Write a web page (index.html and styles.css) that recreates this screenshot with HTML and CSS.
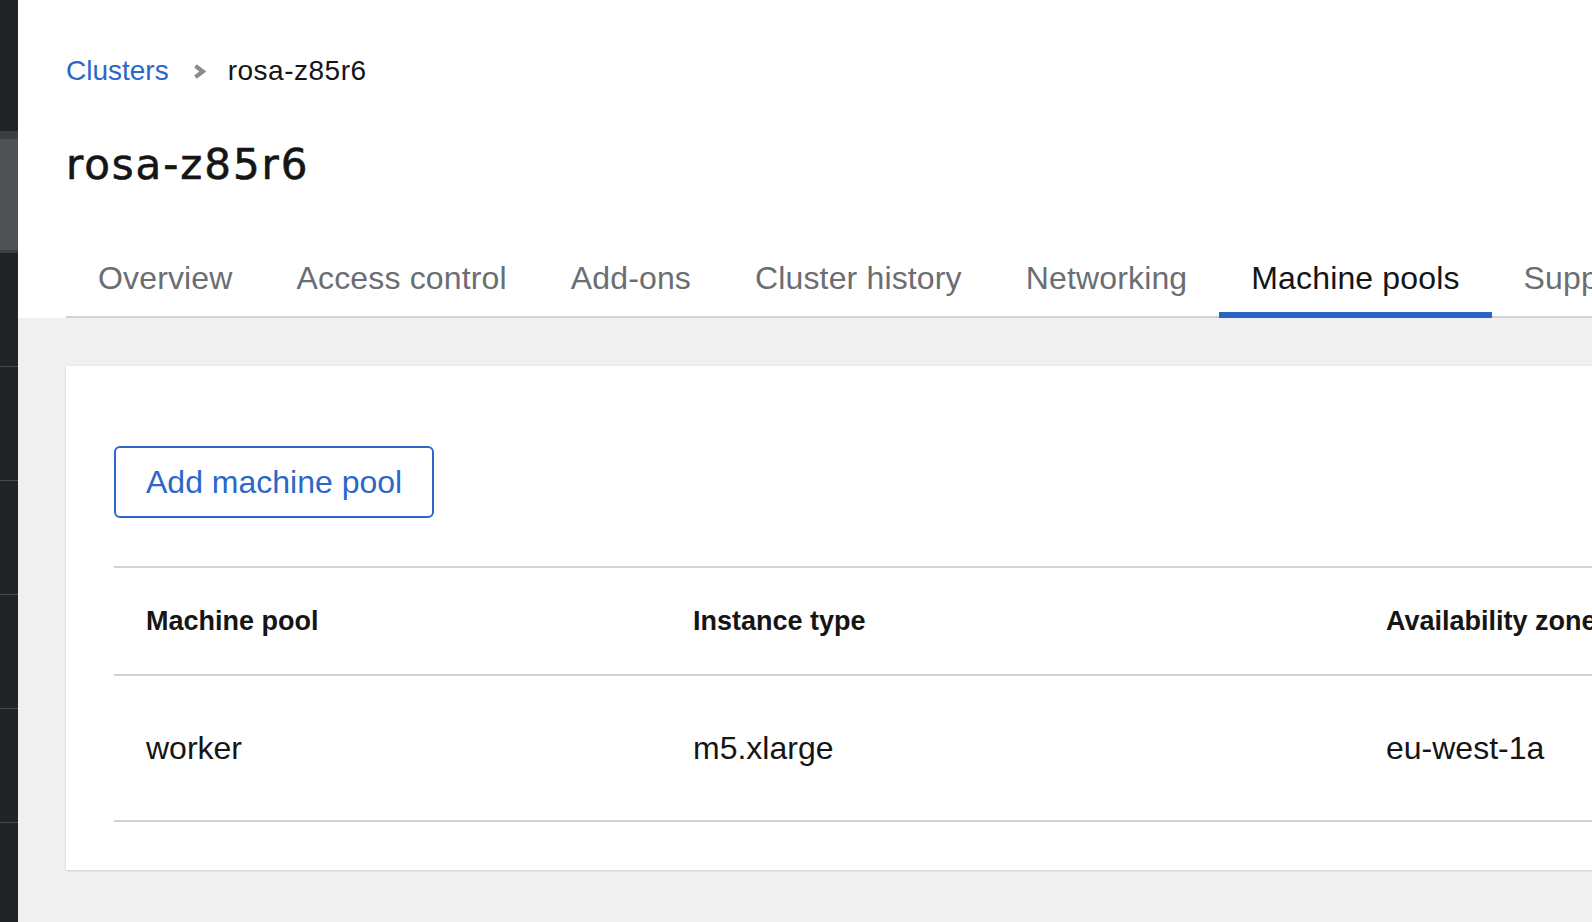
FILE: index.html
```html
<!DOCTYPE html>
<html lang="en">
<head>
<meta charset="utf-8">
<title>rosa-z85r6 - Machine pools</title>
<link rel="stylesheet" href="styles.css">
</head>
<body>
<div class="app">
  <nav class="nav">
    <div class="nav-top"></div>
    <div class="nav-active"></div>
    <div class="nav-item"></div>
    <div class="nav-item"></div>
    <div class="nav-item"></div>
    <div class="nav-item"></div>
    <div class="nav-item"></div>
    <div class="nav-item"></div>
  </nav>
  <main class="main">
    <header class="page-header">
      <ol class="breadcrumb">
        <li class="crumb"><a class="crumb-link" href="#">Clusters</a></li>
        <li class="crumb">
          <svg class="crumb-divider" width="13" height="15" viewBox="0 0 13 15" aria-hidden="true">
            <polyline points="2.4,1.8 9.8,7.5 2.4,13.2" fill="none" stroke="#8a8d90" stroke-width="4.2" stroke-linejoin="miter"/>
          </svg>
          <span class="crumb-current">rosa-z85r6</span>
        </li>
      </ol>
      <h1 class="title">rosa-z85r6</h1>
      <ul class="tabs">
        <li class="tab">Overview</li>
        <li class="tab">Access control</li>
        <li class="tab">Add-ons</li>
        <li class="tab">Cluster history</li>
        <li class="tab">Networking</li>
        <li class="tab tab-active">Machine pools</li>
        <li class="tab">Support</li>
        <li class="tab">Settings</li>
      </ul>
    </header>
    <section class="section">
      <div class="card">
        <button class="btn-secondary" type="button">Add machine pool</button>
        <table class="table">
          <colgroup>
            <col class="col-pool">
            <col class="col-type">
            <col class="col-zone">
            <col class="col-count">
          </colgroup>
          <thead>
            <tr>
              <th>Machine pool</th>
              <th>Instance type</th>
              <th>Availability zones</th>
              <th>Node count</th>
            </tr>
          </thead>
          <tbody>
            <tr>
              <td>worker</td>
              <td>m5.xlarge</td>
              <td>eu-west-1a</td>
              <td>2</td>
            </tr>
          </tbody>
        </table>
      </div>
    </section>
  </main>
</div>
</body>
</html>
```

FILE: styles.css
```css
* {
  box-sizing: border-box;
}

html, body {
  margin: 0;
  padding: 0;
  height: 100%;
  overflow: hidden;
}

body {
  font-family: "Liberation Sans", Arial, sans-serif;
  color: #151515;
  background: #f0f0f0;
}

.app {
  display: flex;
  width: 2600px;
  height: 922px;
  overflow: hidden;
}

/* left navigation rail */
.nav {
  width: 18px;
  flex-shrink: 0;
  background: #212427;
  display: flex;
  flex-direction: column;
  overflow: hidden;
}

.nav > div {
  flex-shrink: 0;
}

.nav-top {
  height: 131px;
}

.nav-active {
  height: 122px;
  background: #4f5255;
  border-top: 8px solid #3c3f42;
  border-bottom: 3px solid #3c3f42;
}

.nav-item {
  height: 114px;
  border-bottom: 1px solid #4a4d50;
}

.main {
  flex: 1;
  background: #f0f0f0;
}

/* header */
.page-header {
  background: #ffffff;
  padding: 50px 0 0 48px;
}

.breadcrumb {
  list-style: none;
  margin: 0;
  padding: 0;
  display: flex;
  align-items: center;
  font-size: 28px;
  line-height: 42px;
}

.crumb {
  display: flex;
  align-items: center;
}

.crumb-link {
  color: #2b67c9;
  text-decoration: none;
}

.crumb-divider {
  display: block;
  margin: 0 22px 0 24px;
}

.crumb-current {
  color: #151515;
  letter-spacing: 0.5px;
}

.title {
  margin: 45px 0 0;
  font-family: "DejaVu Sans", "Liberation Sans", sans-serif;
  font-size: 42px;
  line-height: 56px;
  font-weight: 400;
  letter-spacing: 1.9px;
  color: #151515;
  -webkit-text-stroke: 0.6px #151515;
}

.tabs {
  list-style: none;
  margin: 45px 0 0;
  padding: 0;
  display: flex;
  position: relative;
}

.tabs::before {
  content: "";
  position: absolute;
  left: 0;
  right: 0;
  bottom: 0;
  height: 2px;
  background: #d2d2d2;
}

.tab {
  position: relative;
  padding: 16px 32px;
  font-size: 32px;
  line-height: 48px;
  letter-spacing: 0.15px;
  color: #6a6e73;
  white-space: nowrap;
}

.tab-active {
  color: #151515;
}

.tab-active::after {
  content: "";
  position: absolute;
  left: 0;
  right: 0;
  bottom: 0;
  height: 6px;
  background: #2b65c4;
}

/* content */
.section {
  padding: 48px 0 48px 48px;
}

.card {
  background: #ffffff;
  padding: 80px 0 48px 48px;
  box-shadow: 0 1px 2px rgba(3, 3, 3, 0.12), 0 0 2px rgba(3, 3, 3, 0.06);
}

.btn-secondary {
  display: block;
  height: 72px;
  padding: 0 30px;
  border: 2px solid #2b67c9;
  border-radius: 6px;
  background: #ffffff;
  color: #2b67c9;
  font-family: "Liberation Sans", Arial, sans-serif;
  font-size: 32px;
  line-height: 68px;
}

.table {
  margin-top: 48px;
  border-collapse: collapse;
  table-layout: fixed;
  width: 2200px;
  border-top: 2px solid #d2d2d2;
}

.col-pool {
  width: 547px;
}

.col-type {
  width: 693px;
}

.col-zone {
  width: 600px;
}

.col-count {
  width: 360px;
}

.table th {
  padding: 32px;
  font-size: 27px;
  line-height: 42px;
  font-weight: 700;
  text-align: left;
  color: #151515;
  border-bottom: 2px solid #d2d2d2;
  white-space: nowrap;
}

.table td {
  padding: 48px 32px;
  font-size: 32px;
  line-height: 48px;
  color: #151515;
  border-bottom: 2px solid #d2d2d2;
  white-space: nowrap;
}
```
